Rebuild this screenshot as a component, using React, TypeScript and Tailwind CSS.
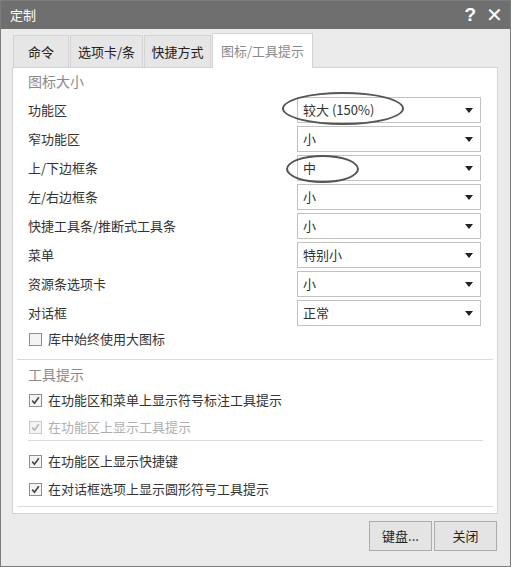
import type { ReactNode } from "react";

type SizeRow = { label: string; value: string };

const sizeRows: SizeRow[] = [
  { label: "功能区", value: "较大 (150%)" },
  { label: "窄功能区", value: "小" },
  { label: "上/下边框条", value: "中" },
  { label: "左/右边框条", value: "小" },
  { label: "快捷工具条/推断式工具条", value: "小" },
  { label: "菜单", value: "特别小" },
  { label: "资源条选项卡", value: "小" },
  { label: "对话框", value: "正常" },
];

const tabs = [
  { label: "命令", w: "w-[56px]" },
  { label: "选项卡/条", w: "w-[73px]" },
  { label: "快捷方式", w: "w-[67px]" },
];

function Dropdown({ value }: { value: string }) {
  return (
    <div className="flex h-[26px] w-[184px] items-center justify-between border border-[#c2c2c2] bg-white pl-[5px] pr-[7px] text-[13px] text-[#333]">
      <span>{value}</span>
      <svg width="8" height="5" viewBox="0 0 8 5" aria-hidden="true">
        <path d="M0 0 H8 L4 5 Z" fill="#222" />
      </svg>
    </div>
  );
}

function CheckBox({ checked, disabled }: { checked: boolean; disabled?: boolean }) {
  return (
    <span
      className={`grid size-[13px] shrink-0 place-items-center border bg-[#f4f4f4] ${
        disabled ? "border-[#c8c8c8]" : "border-[#8e8e8e]"
      }`}
    >
      {checked && (
        <svg width="9" height="9" viewBox="0 0 9 9" aria-hidden="true">
          <path
            d="M1.2 4.6 L3.5 7.2 L7.8 1.2"
            fill="none"
            stroke={disabled ? "#b5b5b5" : "#444"}
            strokeWidth="1.6"
          />
        </svg>
      )}
    </span>
  );
}

function CheckRow({
  children,
  checked,
  disabled,
  className = "",
}: {
  children: ReactNode;
  checked: boolean;
  disabled?: boolean;
  className?: string;
}) {
  return (
    <div className={`ml-[1px] flex h-[20px] items-center gap-[6px] text-[13px] ${className}`}>
      <CheckBox checked={checked} disabled={disabled} />
      <span className={disabled ? "text-[#b0b0b0]" : "text-[#333]"}>{children}</span>
    </div>
  );
}

export default function App() {
  return (
    <div className="relative flex h-[567px] w-[511px] flex-col border border-[#7c7c7c] bg-[#ebebeb] font-['Noto_Sans_CJK_SC',sans-serif] leading-[20px]">
      {/* title bar */}
      <div className="flex h-[28px] items-center justify-between bg-[#6f6f6f] pl-[9px] pr-[7px] text-white">
        <span className="text-[13px]">定制</span>
        <div className="flex items-center gap-[10px] font-['Liberation_Sans',sans-serif] text-[19px] font-bold">
          <span>?</span>
          <span className="text-[20px] font-normal">✕</span>
        </div>
      </div>

      {/* tabs */}
      <div className="mt-[4px] flex items-end gap-[1px] pl-[12px]">
        {tabs.map((t) => (
          <div
            key={t.label}
            className={`flex h-[32px] items-center justify-center border border-b-0 border-[#d3d3d3] bg-[#e6e6e6] text-[13px] text-[#222] ${t.w}`}
          >
            {t.label}
          </div>
        ))}
        <div className="relative z-10 -mb-[1px] flex h-[35px] w-[101px] items-center justify-center border border-b-0 border-[#d3d3d3] bg-white text-[13px] text-[#8a8a8a]">
          图标/工具提示
        </div>
      </div>

      {/* panel */}
      <div className="ml-[11px] mr-[12px] flex h-[447px] flex-col border border-[#d3d3d3] bg-white px-[4px]">
        <div className="flex flex-col border-b border-[#dcdcdc] pb-[10px] pl-[11px] pr-[12px] pt-[3px]">
          <div className="text-[14px] text-[#8a8a8a]">图标大小</div>
          <div className="mt-[6px] flex flex-col gap-[3px]">
            {sizeRows.map((r) => (
              <div key={r.label} className="flex items-center justify-between">
                <span className="text-[13px] text-[#333]">{r.label}</span>
                <Dropdown value={r.value} />
              </div>
            ))}
          </div>
          <CheckRow checked={false} className="mt-[3px]">
            库中始终使用大图标
          </CheckRow>
        </div>

        <div className="flex flex-col border-b border-[#dcdcdc] pb-[7px] pl-[11px] pr-[10px] pt-[4px]">
          <div className="text-[14px] text-[#8a8a8a]">工具提示</div>
          <CheckRow checked className="mt-[6px]">
            在功能区和菜单上显示符号标注工具提示
          </CheckRow>
          <CheckRow checked disabled className="mt-[7px]">
            在功能区上显示工具提示
          </CheckRow>
          <div className="mt-[3px] h-px bg-[#dcdcdc]" />
          <CheckRow checked className="mt-[10px]">
            在功能区上显示快捷键
          </CheckRow>
          <CheckRow checked className="mt-[8px]">
            在对话框选项上显示圆形符号工具提示
          </CheckRow>
        </div>
      </div>

      {/* buttons */}
      <div className="mt-[7px] flex justify-end gap-[2px] pr-[13px]">
        <button className="h-[30px] w-[63px] border border-[#ababab] bg-[#e4e4e4] text-[13px] text-[#222]">
          键盘...
        </button>
        <button className="h-[30px] w-[63px] border border-[#ababab] bg-[#e4e4e4] text-[13px] text-[#222]">
          关闭
        </button>
      </div>

      {/* hand-drawn annotation ellipses */}
      <div className="pointer-events-none absolute left-[281px] top-[91px] h-[33px] w-[122px] rounded-[50%] border-2 border-[#555]" />
      <div className="pointer-events-none absolute left-[285px] top-[154px] h-[28px] w-[73px] rounded-[50%] border-2 border-[#555]" />
    </div>
  );
}
